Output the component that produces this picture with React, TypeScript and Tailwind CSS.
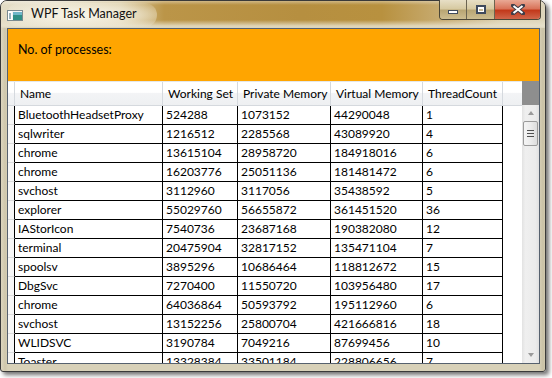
import React from "react";

const rows: [string, string, string, string, string][] = [
  ["BluetoothHeadsetProxy", "524288", "1073152", "44290048", "1"],
  ["sqlwriter", "1216512", "2285568", "43089920", "4"],
  ["chrome", "13615104", "28958720", "184918016", "6"],
  ["chrome", "16203776", "25051136", "181481472", "6"],
  ["svchost", "3112960", "3117056", "35438592", "5"],
  ["explorer", "55029760", "56655872", "361451520", "36"],
  ["IAStorIcon", "7540736", "23687168", "190382080", "12"],
  ["terminal", "20475904", "32817152", "135471104", "7"],
  ["spoolsv", "3895296", "10686464", "118812672", "15"],
  ["DbgSvc", "7270400", "11550720", "103956480", "17"],
  ["chrome", "64036864", "50593792", "195112960", "6"],
  ["svchost", "13152256", "25800704", "421666816", "18"],
  ["WLIDSVC", "3190784", "7049216", "87699456", "10"],
  ["Toaster", "13328384", "33501184", "228806656", "7"],
];

const widths = ["w-[148px]", "w-[75px]", "w-[93px]", "w-[92px]", "w-[80px]"];
const headers = ["Name", "Working Set", "Private Memory", "Virtual Memory", "ThreadCount"];

function WinIcon() {
  return (
    <svg width="16" height="11" viewBox="0 0 16 11">
      <rect x="0.5" y="0.5" width="15" height="10" fill="#f4f6f6" stroke="#7a8a90" />
      <rect x="1" y="1" width="4" height="9" fill="#ffffff" />
      <rect x="6" y="2" width="9" height="8" fill="#2f8f86" />
      <rect x="6" y="2" width="9" height="3" fill="#6fb7c9" />
      <rect x="2" y="3" width="2" height="6" fill="#9ab4be" />
    </svg>
  );
}

export default function App() {
  return (
    <div className="w-[552px] h-[378px] bg-white overflow-hidden font-['Lato','Noto_Sans',sans-serif] text-[12px] text-black">
      <div className="w-[546px] h-[372px] rounded-t-[7px] rounded-b-[3px] border border-[#3a3a3a] shadow-[3px_3px_4px_rgba(0,0,0,0.55)] flex flex-col bg-[linear-gradient(90deg,#ddd6bf_0px,#cfc7ac_4px,#d8d1b8_7px,#d8d1b8_538px,#c9c1a6_542px,#d6cfb6_546px)] relative">
        {/* title bar */}
        <div className="h-[27px] flex items-start rounded-t-[6px] bg-[linear-gradient(90deg,#e3dcc5_0%,#e6dfc9_10%,#d9caa2_22%,#bb9548_30%,#b68f40_55%,#b8913f_70%,#c9ae76_82%,#ddd2b3_92%,#ddd5bb_100%)] relative">
          <div className="absolute inset-0 rounded-t-[6px] bg-[linear-gradient(180deg,rgba(255,255,255,0.35)_0px,rgba(255,255,255,0)_4px,rgba(255,255,255,0)_19px,rgba(232,226,205,0.85)_25px,rgba(220,213,190,1)_27px)]" />
          <div className="absolute left-[6px] top-[2px] w-[150px] h-[24px] rounded-full bg-[radial-gradient(ellipse_at_center,rgba(250,247,236,0.95)_0%,rgba(245,240,224,0.6)_55%,rgba(245,240,224,0)_100%)]" />
          <div className="relative ml-[6px] mt-[9px]">
            <WinIcon />
          </div>
          <div className="relative ml-[8px] mt-[5px] text-[12.5px] leading-[16px] text-[#111]">WPF Task Manager</div>
          <div className="flex-1" />
          <div className="relative mr-[4px] -mt-px flex h-[20px] border border-t-0 border-[#4b4636] rounded-b-[4px] overflow-hidden">
            <div className="w-[27px] flex items-end justify-center pb-[5px] border-r border-[#6b6450] bg-[linear-gradient(180deg,#e7dfc6_0%,#d7caa2_45%,#b9a674_55%,#cdbd90_100%)]">
              <div className="w-[10px] h-[4px] bg-white border border-[#3f4a5c]" />
            </div>
            <div className="w-[28px] flex items-center justify-center border-r border-[#6b6450] bg-[linear-gradient(180deg,#e7dfc6_0%,#d7caa2_45%,#b9a674_55%,#cdbd90_100%)]">
              <div className="w-[10px] h-[9px] border-[2px] border-[#3f4a5c] bg-white flex items-center justify-center">
                <div className="w-[4px] h-[2px] bg-[#c7b992]" />
              </div>
            </div>
            <div className="w-[45px] flex items-center justify-center bg-[linear-gradient(180deg,#e9a995_0%,#d9745a_45%,#c2391b_55%,#d0664a_100%)]">
              <svg width="14" height="11" viewBox="0 0 14 11">
                <path d="M2 1.5 L12 9.5 M12 1.5 L2 9.5" stroke="#3d3d48" strokeWidth="4" strokeLinecap="square" />
                <path d="M2.5 2 L11.5 9 M11.5 2 L2.5 9" stroke="#ffffff" strokeWidth="2" />
              </svg>
            </div>
          </div>
        </div>

        {/* client */}
        <div className="ml-[6px] mr-[5px] mb-[7px] flex-1 min-h-0 border border-[#56616e] flex flex-col bg-white">
          <div className="h-[52px] bg-[#ffa500] flex items-center pl-[10px] pb-[10px] shrink-0 text-[12.5px]">
            No. of processes:
          </div>
          <div className="flex-1 min-h-0 flex overflow-hidden">
            <div className="w-[514px] flex flex-col">
              {/* header */}
              <div className="h-[25px] flex shrink-0 border-t border-[#e4e7ea] border-b border-b-[#d5d9de] bg-[linear-gradient(180deg,#ffffff_0%,#ffffff_45%,#f3f4f6_50%,#eef0f2_100%)]">
                <div className="w-[7px] border-r border-[#d5d9de]" />
                {headers.map((h, i) => (
                  <div key={h} className={`${widths[i]} border-r border-[#d5d9de] flex items-center pl-[5px] leading-[14px] whitespace-nowrap overflow-hidden`}>
                    {h}
                  </div>
                ))}
                <div className="flex-1" />
              </div>
              {rows.map((r, ri) => (
                <div key={ri} className="h-[19px] flex shrink-0">
                  <div className="w-[7px] border-r border-black border-b border-b-[#dcdcdc] bg-[#f7f7f7]" />
                  {r.map((c, ci) => (
                    <div
                      key={ci}
                      className={`${widths[ci]} border-r border-b border-black flex items-center pl-[3px] leading-[14px] whitespace-nowrap overflow-hidden`}
                    >
                      {c}
                    </div>
                  ))}
                  <div className="flex-1" />
                </div>
              ))}
            </div>
            {/* scrollbar */}
            <div className="w-[17px] flex flex-col shrink-0">
              <div className="h-[24px] bg-[#8e8e8e] shrink-0" />
              <div className="flex-1 flex flex-col items-center bg-[linear-gradient(90deg,#e2e2e2_0%,#efefef_20%,#ebebeb_80%,#e0e0e0_100%)]">
                <div className="h-[16px] flex items-center justify-center shrink-0">
                  <div className="w-0 h-0 border-l-[3px] border-r-[3px] border-b-[4px] border-l-transparent border-r-transparent border-b-[#9a9a9a]" />
                </div>
                <div className="w-[15px] h-[25px] rounded-[2px] border border-[#9b9b9b] bg-[linear-gradient(90deg,#f5f5f5_0%,#ececec_50%,#dcdcdc_100%)] flex flex-col items-center justify-center gap-[2px] shrink-0">
                  <div className="w-[7px] h-px bg-[#4f4f4f]" />
                  <div className="w-[7px] h-px bg-[#4f4f4f]" />
                  <div className="w-[7px] h-px bg-[#4f4f4f]" />
                </div>
                <div className="flex-1" />
                <div className="h-[16px] flex items-center justify-center shrink-0">
                  <div className="w-0 h-0 border-l-[3px] border-r-[3px] border-t-[4px] border-l-transparent border-r-transparent border-t-[#9a9a9a]" />
                </div>
              </div>
            </div>
          </div>
        </div>
      </div>
    </div>
  );
}
